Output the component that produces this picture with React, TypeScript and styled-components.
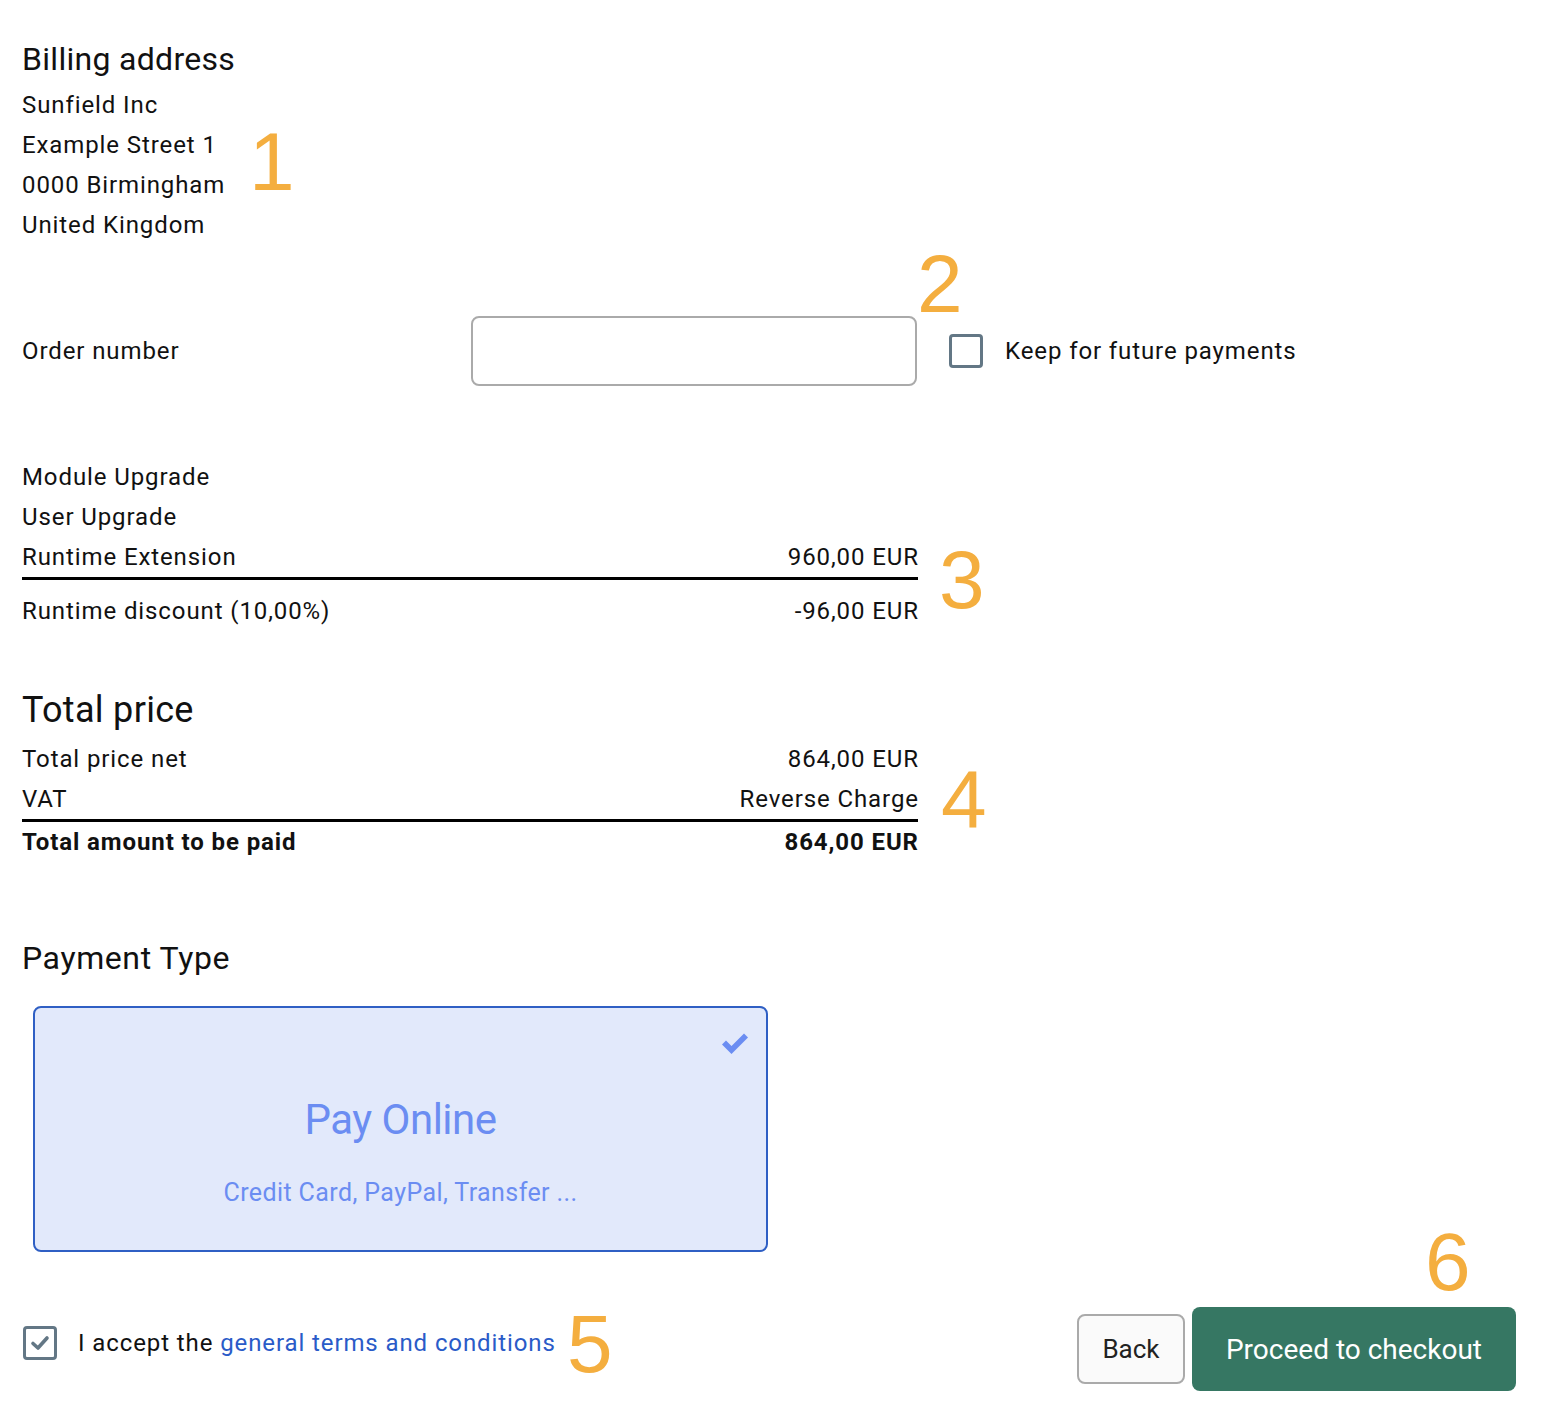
import React from "react";
import styled, { createGlobalStyle } from "styled-components";

const GlobalStyle = createGlobalStyle`
  html, body {
    margin: 0;
    padding: 0;
    background: #ffffff;
  }
  body {
    font-family: Roboto, "Liberation Sans", Arial, sans-serif;
    color: #111111;
  }
`;

/* ---------------- layout ---------------- */

const Page = styled.div`
  position: relative;
  width: 1542px;
  height: 1418px;
  box-sizing: border-box;
  padding: 39px 26px 0 22px;
`;

const Section = styled.section<{ $gap?: number }>`
  margin-top: ${(p) => p.$gap ?? 0}px;
`;

const Heading = styled.h2<{ $size?: number; $spacing?: number }>`
  margin: 0;
  font-weight: 400;
  font-size: ${(p) => p.$size ?? 32}px;
  line-height: ${(p) => (p.$size ?? 32) + 8}px;
  letter-spacing: ${(p) => p.$spacing ?? 0.4}px;
  color: #111;
`;

const Line = styled.div`
  font-size: 24px;
  line-height: 40px;
  letter-spacing: 0.9px;
`;

const FieldRow = styled.div`
  display: flex;
  align-items: center;
`;

const FieldLabel = styled.label`
  width: 449px;
  font-size: 24px;
  letter-spacing: 0.9px;
`;

const TextInput = styled.input`
  width: 446px;
  height: 70px;
  box-sizing: border-box;
  border: 2px solid #aaaaaa;
  border-radius: 8px;
  font-size: 22px;
  padding: 0 16px;
  margin-right: 32px;
  outline: none;
`;

const CheckBox = styled.span`
  display: inline-flex;
  align-items: center;
  justify-content: center;
  width: 34px;
  height: 34px;
  box-sizing: border-box;
  border: 3px solid #637785;
  border-radius: 4px;
  flex: none;
`;

const CheckLabel = styled.span`
  font-size: 24px;
  letter-spacing: 0.9px;
  margin-left: 22px;
`;

const Lines = styled.div<{ $gap?: number }>`
  width: 896px;
  margin-top: ${(p) => p.$gap ?? 0}px;
`;

const PriceRow = styled.div<{ $bold?: boolean }>`
  display: flex;
  justify-content: space-between;
  font-size: 24px;
  line-height: 40px;
  letter-spacing: 0.9px;
  font-weight: ${(p) => (p.$bold ? 700 : 400)};

  & > span:last-child {
    margin-right: -0.9px;
  }
`;

const Rule = styled.hr<{ $after?: number }>`
  margin: 0 0 ${(p) => p.$after ?? 0}px;
  border: none;
  height: 3px;
  background: #000;
`;

const PayCard = styled.div`
  position: relative;
  margin: 28px 0 0 11px;
  width: 735px;
  height: 246px;
  box-sizing: border-box;
  border: 2px solid #2f5fc4;
  border-radius: 8px;
  background: #e2e9fb;
  display: flex;
  flex-direction: column;
  align-items: center;
  color: #6b8df2;
`;

const CardCheck = styled.svg`
  position: absolute;
  top: 23px;
  right: 17px;
  width: 28px;
  height: 24px;
`;

const CardTitle = styled.div`
  margin-top: 88px;
  font-size: 42px;
  line-height: 48px;
  letter-spacing: -0.5px;
`;

const CardSub = styled.div`
  margin-top: 33px;
  font-size: 25px;
  line-height: 32px;
  letter-spacing: 0.4px;
`;

const Footer = styled.div`
  margin-top: 55px;
  display: flex;
  justify-content: space-between;
  align-items: center;
`;

const Accept = styled.div`
  display: flex;
  align-items: center;
  margin: 0 0 12px 1px;
`;

const AcceptText = styled.span`
  font-size: 24px;
  letter-spacing: 0.9px;
  margin-left: 21px;
`;

const Link = styled.a`
  color: #2a5bc8;
  text-decoration: none;
`;

const Buttons = styled.div`
  display: flex;
  align-items: center;
  gap: 7px;
`;

const Button = styled.button<{ $primary?: boolean }>`
  font-family: Roboto, "Liberation Sans", Arial, sans-serif;
  border-radius: 8px;
  cursor: pointer;
  box-sizing: border-box;
  ${(p) =>
    p.$primary
      ? `
    height: 84px;
    width: 324px;
    background: #367763;
    color: #ffffff;
    border: none;
    font-size: 28px;
  `
      : `
    height: 70px;
    width: 108px;
    background: #fafafa;
    color: #222;
    border: 2px solid #aaaaaa;
    font-size: 26px;
  `}
`;

const Marker = styled.span<{ $x: number; $y: number }>`
  position: absolute;
  left: ${(p) => p.$x}px;
  top: ${(p) => p.$y}px;
  font-family: "Liberation Sans", Arial, sans-serif;
  font-size: 82px;
  line-height: 82px;
  color: #f4ae3f;
`;

/* ---------------- page ---------------- */

export default function App() {
  return (
    <>
      <GlobalStyle />
      <Page>
        {/* Billing address */}
        <Section>
          <Heading $spacing={0.3}>Billing address</Heading>
          <Section $gap={6}>
            <Line>Sunfield Inc</Line>
            <Line>Example Street 1</Line>
            <Line>0000 Birmingham</Line>
            <Line>United Kingdom</Line>
          </Section>
        </Section>

        {/* Order number */}
        <Section $gap={71}>
          <FieldRow>
            <FieldLabel>Order number</FieldLabel>
            <TextInput />
            <CheckBox />
            <CheckLabel>Keep for future payments</CheckLabel>
          </FieldRow>
        </Section>

        {/* Items */}
        <Section $gap={71}>
          <Lines>
            <PriceRow>Module Upgrade</PriceRow>
            <PriceRow>User Upgrade</PriceRow>
            <PriceRow>
              <span>Runtime Extension</span>
              <span>960,00 EUR</span>
            </PriceRow>
            <Rule $after={11} />
            <PriceRow>
              <span>Runtime discount (10,00%)</span>
              <span>-96,00 EUR</span>
            </PriceRow>
          </Lines>
        </Section>

        {/* Totals */}
        <Section $gap={57}>
          <Heading $size={36} $spacing={0.3}>Total price</Heading>
          <Lines $gap={7}>
            <PriceRow>
              <span>Total price net</span>
              <span>864,00 EUR</span>
            </PriceRow>
            <PriceRow>
              <span>VAT</span>
              <span>Reverse Charge</span>
            </PriceRow>
            <Rule />
            <PriceRow $bold>
              <span>Total amount to be paid</span>
              <span>864,00 EUR</span>
            </PriceRow>
          </Lines>
        </Section>

        {/* Payment type */}
        <Section $gap={76}>
          <Heading $spacing={0.6}>Payment Type</Heading>
          <PayCard>
            <CardCheck viewBox="0 0 28 24">
              <path
                d="M1 13.5 L5 9.5 L10.5 15 L23 2.5 L27 6.5 L10.5 23 Z"
                fill="#6b8df2"
              />
            </CardCheck>
            <CardTitle>Pay Online</CardTitle>
            <CardSub>Credit Card, PayPal, Transfer ...</CardSub>
          </PayCard>
        </Section>

        {/* Footer */}
        <Footer>
          <Accept>
            <CheckBox>
              <svg width="20" height="16" viewBox="0 0 20 16">
                <path
                  d="M3 8.5 L8 13 L17 3"
                  fill="none"
                  stroke="#637785"
                  strokeWidth="3.6"
                  strokeLinecap="round"
                  strokeLinejoin="round"
                />
              </svg>
            </CheckBox>
            <AcceptText>
              I accept the <Link href="#">general terms and conditions</Link>
            </AcceptText>
          </Accept>
          <Buttons>
            <Button>Back</Button>
            <Button $primary>Proceed to checkout</Button>
          </Buttons>
        </Footer>

        {/* annotations */}
        <Marker $x={249} $y={121}>1</Marker>
        <Marker $x={917} $y={243}>2</Marker>
        <Marker $x={939} $y={539}>3</Marker>
        <Marker $x={941} $y={759}>4</Marker>
        <Marker $x={567} $y={1303}>5</Marker>
        <Marker $x={1425} $y={1221}>6</Marker>
      </Page>
    </>
  );
}
